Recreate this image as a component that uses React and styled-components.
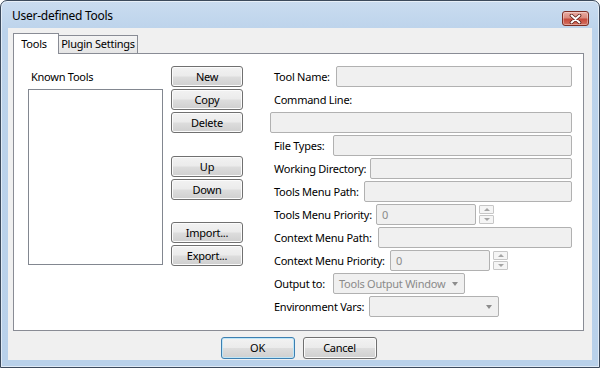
import React from 'react';
import styled, { createGlobalStyle } from 'styled-components';

const GlobalStyle = createGlobalStyle`
    html, body { margin: 0; padding: 0; background: #ffffff; }
    body {
        font-family: "Segoe UI", "Noto Sans", sans-serif;
        font-size: 11px;
        letter-spacing: -0.25px;
        color: #000;
    }
`;

const Window = styled.div`
    width: 600px;
    height: 368px;
    box-sizing: border-box;
    border: 1px solid #3c4a5c;
    border-radius: 7px 7px 0 0;
    background: linear-gradient(#cadcf0, #bcd3eb 30px, #b9d1ea);
    box-shadow: inset 0 0 0 1px rgba(255,255,255,0.55);
    padding: 0 7px 7px;
    display: flex;
    flex-direction: column;
`;

const TitleBar = styled.div`
    height: 27px;
    flex-shrink: 0;
    display: flex;
    justify-content: space-between;
    align-items: flex-start;
`;

const Title = styled.span`
    padding: 7px 0 0 4px;
    font-size: 12px;
    line-height: 16px;
    color: #000;
`;

const CloseButton = styled.div`
    width: 27px;
    height: 15px;
    box-sizing: border-box;
    margin: 10px 3px 0 0;
    border: 1px solid #7d2e24;
    border-radius: 3px;
    background: linear-gradient(#e9aba2 0%, #d98a7e 45%, #c6493b 55%, #d47262 100%);
    box-shadow: inset 0 0 0 1px rgba(255,255,255,0.35);
    display: flex;
    justify-content: center;
    align-items: center;
`;

const Client = styled.div`
    flex: 1;
    background: #f0f0f0;
    padding: 5px 8px 0 5px;
    display: flex;
    flex-direction: column;
`;

const TabStrip = styled.div`
    height: 20px;
    display: flex;
    align-items: flex-end;
    position: relative;
    z-index: 1;
`;

const Tab = styled.div`
    box-sizing: border-box;
    width: ${(p) => p.width}px;
    height: ${(p) => (p.active ? 21 : 18)}px;
    margin-bottom: ${(p) => (p.active ? -1 : 0)}px;
    margin-left: ${(p) => (p.active ? 0 : -1)}px;
    border: 1px solid #898c95;
    border-bottom: none;
    background: ${(p) => (p.active ? '#ffffff' : 'linear-gradient(#f4f4f4, #e5e5e5)')};
    text-align: center;
    line-height: ${(p) => (p.active ? 15 : 16)}px;
    padding-top: ${(p) => (p.active ? 2 : 0)}px;
    padding-right: ${(p) => (p.active ? 4 : 0)}px;
    position: relative;
    z-index: ${(p) => (p.active ? 2 : 0)};
    white-space: nowrap;
`;

const Panel = styled.div`
    height: 278px;
    box-sizing: border-box;
    border: 1px solid #898c95;
    background: #ffffff;
    display: flex;
`;

const LeftColumn = styled.div`
    width: 135px;
    padding: 16px 0 0 14px;
    display: flex;
    flex-direction: column;
`;

const ListLabel = styled.div`
    height: 14px;
    line-height: 14px;
    padding-left: 3px;
    margin-bottom: 5px;
`;

const ListBox = styled.div`
    height: 176px;
    box-sizing: border-box;
    border: 1px solid #828790;
    background: #fff;
`;

const ButtonColumn = styled.div`
    width: 72px;
    margin-left: 8px;
    padding-top: 12px;
    display: flex;
    flex-direction: column;
`;

const Button = styled.div`
    box-sizing: border-box;
    width: ${(p) => p.width || 72}px;
    height: ${(p) => p.height || 21}px;
    margin-top: ${(p) => p.gap || 0}px;
    border: 1px solid ${(p) => (p.primary ? '#3c7fb1' : '#707070')};
    border-radius: 3px;
    background: linear-gradient(#f2f2f2 0%, #ebebeb 48%, #dddddd 52%, #cfcfcf 100%);
    box-shadow: inset 0 0 0 1px ${(p) => (p.primary ? '#bfe6f8' : '#fbfbfb')};
    display: flex;
    justify-content: center;
    align-items: center;
    line-height: 14px;
`;

const Form = styled.div`
    flex: 1;
    margin: 0 11px 0 27px;
    padding-top: 12px;
    display: flex;
    flex-direction: column;
    gap: 2px;
`;

const Row = styled.div`
    height: 21px;
    display: flex;
    align-items: center;
    padding-left: ${(p) => (p.flush ? 0 : 4)}px;
`;

const Label = styled.span`
    width: ${(p) => (p.width ? `${p.width}px` : 'auto')};
    flex-shrink: 0;
    white-space: nowrap;
    line-height: 14px;
`;

const Field = styled.div`
    box-sizing: border-box;
    height: 21px;
    flex: ${(p) => (p.width ? '0 0 auto' : '1')};
    width: ${(p) => (p.width ? `${p.width}px` : 'auto')};
    border: 1px solid #b1b1b1;
    border-radius: 2px;
    background: #f0f0f0;
    color: #8a8a8a;
    padding: 0 5px;
    display: flex;
    align-items: center;
    justify-content: space-between;
    white-space: nowrap;
`;

const Spin = styled.div`
    margin-left: 3px;
    width: 15px;
    display: flex;
    flex-direction: column;
    gap: 1px;
`;

const SpinHalf = styled.div`
    box-sizing: border-box;
    height: 9px;
    border: 1px solid #c6c6c6;
    border-radius: 1px;
    background: #f5f5f5;
    display: flex;
    justify-content: center;
    align-items: center;
    &::after {
        content: '';
        border-left: 3px solid transparent;
        border-right: 3px solid transparent;
        ${(p) => (p.up ? 'border-bottom' : 'border-top')}: 3px solid #a5a5a5;
    }
`;

const ComboArrow = styled.span`
    width: 0;
    height: 0;
    margin-right: 1px;
    border-left: 3.5px solid transparent;
    border-right: 3.5px solid transparent;
    border-top: 4px solid #8c8c8c;
`;

const Footer = styled.div`
    display: flex;
    justify-content: center;
    gap: 8px;
    padding-top: 6px;
`;

const fields = [
    { label: 'Tool Name:', labelWidth: 62 },
    { label: 'Command Line:', only: true },
    { full: true },
    { label: 'File Types:', labelWidth: 59 },
    { label: 'Working Directory:', labelWidth: 96 },
    { label: 'Tools Menu Path:', labelWidth: 90 },
    { label: 'Tools Menu Priority:', labelWidth: 102, spin: true },
    { label: 'Context Menu Path:', labelWidth: 104 },
    { label: 'Context Menu Priority:', labelWidth: 116, spin: true },
    { label: 'Output to:', labelWidth: 59, combo: 132, value: 'Tools Output Window' },
    { label: 'Environment Vars:', labelWidth: 95, combo: 130, value: '' },
];

const FormRow = ({ f }) => {
    if (f.full) {
        return (
            <Row flush>
                <Field />
            </Row>
        );
    }
    if (f.only) {
        return (
            <Row>
                <Label>{f.label}</Label>
            </Row>
        );
    }
    return (
        <Row>
            <Label width={f.labelWidth}>{f.label}</Label>
            {f.spin ? (
                <>
                    <Field width={100}>0</Field>
                    <Spin>
                        <SpinHalf up />
                        <SpinHalf />
                    </Spin>
                </>
            ) : f.combo ? (
                <Field width={f.combo}>
                    <span>{f.value}</span>
                    <ComboArrow />
                </Field>
            ) : (
                <Field />
            )}
        </Row>
    );
};

export default function App() {
    return (
        <>
            <GlobalStyle />
            <Window>
                <TitleBar>
                    <Title>User-defined Tools</Title>
                    <CloseButton>
                        <svg width="13" height="10" viewBox="0 0 13 10">
                            <path d="M2.5 1.5 L10.5 8.5 M10.5 1.5 L2.5 8.5" stroke="#5a1c16" strokeWidth="3.6" strokeLinecap="round" />
                            <path d="M2.5 1.5 L10.5 8.5 M10.5 1.5 L2.5 8.5" stroke="#ffffff" strokeWidth="2" strokeLinecap="round" />
                        </svg>
                    </CloseButton>
                </TitleBar>
                <Client>
                    <TabStrip>
                        <Tab active width={46}>Tools</Tab>
                        <Tab width={80}>Plugin Settings</Tab>
                    </TabStrip>
                    <Panel>
                        <LeftColumn>
                            <ListLabel>Known Tools</ListLabel>
                            <ListBox />
                        </LeftColumn>
                        <ButtonColumn>
                            <Button>New</Button>
                            <Button gap={2}>Copy</Button>
                            <Button gap={2}>Delete</Button>
                            <Button gap={23}>Up</Button>
                            <Button gap={2}>Down</Button>
                            <Button gap={22}>Import...</Button>
                            <Button gap={2}>Export...</Button>
                        </ButtonColumn>
                        <Form>
                            {fields.map((f, i) => (
                                <FormRow key={i} f={f} />
                            ))}
                        </Form>
                    </Panel>
                    <Footer>
                        <Button primary width={74} height={22}>OK</Button>
                        <Button width={74} height={22}>Cancel</Button>
                    </Footer>
                </Client>
            </Window>
        </>
    );
}
